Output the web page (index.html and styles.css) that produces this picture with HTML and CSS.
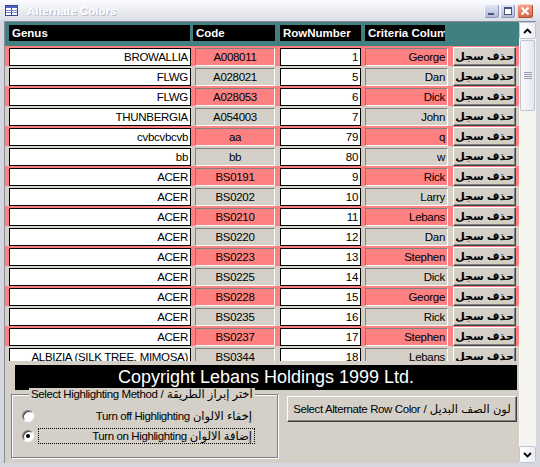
FILE: index.html
```html
<!DOCTYPE html>
<html>
<head>
<meta charset="utf-8">
<title>Alternate Colors</title>
<link rel="stylesheet" href="styles.css">
</head>
<body>
<div class="window">
  <div class="titlebar">
    <svg class="appicon" width="13" height="11" viewBox="0 0 13 11">
      <rect x="0.5" y="0.5" width="12" height="10" fill="#fff" stroke="#33489a"/>
      <rect x="1" y="1" width="11" height="2" fill="#4f66c0"/>
      <line x1="6.5" y1="3" x2="6.5" y2="10" stroke="#33489a"/>
      <line x1="1" y1="5.5" x2="12" y2="5.5" stroke="#7b8cd0"/>
      <line x1="1" y1="7.5" x2="12" y2="7.5" stroke="#7b8cd0"/>
    </svg>
    <span class="title">Alternate Colors</span>
    <div class="wctrls">
      <span class="wbtn wmin"><svg width="13" height="12" viewBox="0 0 13 12"><rect x="3" y="8" width="6" height="2" fill="#4a557e"/></svg></span>
      <span class="wbtn wmax"><svg width="13" height="12" viewBox="0 0 13 12"><rect x="3.5" y="2.5" width="7" height="7" fill="#fff" stroke="#4a557e"/><rect x="3.5" y="2.5" width="7" height="1.5" fill="#4a557e"/></svg></span>
      <span class="wbtn wclose"><svg width="14" height="12" viewBox="0 0 14 12"><path d="M3.5 2.5 L10.5 9.5 M10.5 2.5 L3.5 9.5" stroke="#fff" stroke-width="2"/></svg></span>
    </div>
  </div>
  <div class="client">
    <div class="form">
      <div class="header">
        <div class="hcell hg">Genus</div>
        <div class="hcell hc">Code</div>
        <div class="hcell hn">RowNumber</div>
        <div class="hcell hk">Criteria Column</div>
      </div>
      <div class="detail">
        <div class="row hl"><div class="f genus">BROWALLIA</div><div class="f code">A008011</div><div class="f num">1</div><div class="f crit">George</div><div class="del">حذف سجل</div></div>
        <div class="row"><div class="f genus">FLWG</div><div class="f code">A028021</div><div class="f num">5</div><div class="f crit">Dan</div><div class="del">حذف سجل</div></div>
        <div class="row hl"><div class="f genus">FLWG</div><div class="f code">A028053</div><div class="f num">6</div><div class="f crit">Dick</div><div class="del">حذف سجل</div></div>
        <div class="row"><div class="f genus">THUNBERGIA</div><div class="f code">A054003</div><div class="f num">7</div><div class="f crit">John</div><div class="del">حذف سجل</div></div>
        <div class="row hl"><div class="f genus">cvbcvbcvb</div><div class="f code">aa</div><div class="f num">79</div><div class="f crit">q</div><div class="del">حذف سجل</div></div>
        <div class="row"><div class="f genus">bb</div><div class="f code">bb</div><div class="f num">80</div><div class="f crit">w</div><div class="del">حذف سجل</div></div>
        <div class="row hl"><div class="f genus">ACER</div><div class="f code">BS0191</div><div class="f num">9</div><div class="f crit">Rick</div><div class="del">حذف سجل</div></div>
        <div class="row"><div class="f genus">ACER</div><div class="f code">BS0202</div><div class="f num">10</div><div class="f crit">Larry</div><div class="del">حذف سجل</div></div>
        <div class="row hl"><div class="f genus">ACER</div><div class="f code">BS0210</div><div class="f num">11</div><div class="f crit">Lebans</div><div class="del">حذف سجل</div></div>
        <div class="row"><div class="f genus">ACER</div><div class="f code">BS0220</div><div class="f num">12</div><div class="f crit">Dan</div><div class="del">حذف سجل</div></div>
        <div class="row hl"><div class="f genus">ACER</div><div class="f code">BS0223</div><div class="f num">13</div><div class="f crit">Stephen</div><div class="del">حذف سجل</div></div>
        <div class="row"><div class="f genus">ACER</div><div class="f code">BS0225</div><div class="f num">14</div><div class="f crit">Dick</div><div class="del">حذف سجل</div></div>
        <div class="row hl"><div class="f genus">ACER</div><div class="f code">BS0228</div><div class="f num">15</div><div class="f crit">George</div><div class="del">حذف سجل</div></div>
        <div class="row"><div class="f genus">ACER</div><div class="f code">BS0235</div><div class="f num">16</div><div class="f crit">Rick</div><div class="del">حذف سجل</div></div>
        <div class="row hl"><div class="f genus">ACER</div><div class="f code">BS0237</div><div class="f num">17</div><div class="f crit">Stephen</div><div class="del">حذف سجل</div></div>
        <div class="row"><div class="f genus">ALBIZIA (SILK TREE, MIMOSA)</div><div class="f code">BS0344</div><div class="f num">18</div><div class="f crit">Lebans</div><div class="del">حذف سجل</div></div>
      </div>
      <div class="footer">
        <div class="copyright">Copyright Lebans Holdings 1999 Ltd.</div>
        <div class="ctrlrow">
          <fieldset class="group">
            <legend class="glegend"><span dir="rtl">أختر إبراز الطريقة / Select Highlighting Method</span></legend>
            <div class="opt">
              <span class="radio"></span>
              <div class="optlabel" dir="rtl">إخفاء الالوان Turn off Highlighting</div>
            </div>
            <div class="opt focus">
              <span class="radio on"></span>
              <div class="optlabel" dir="rtl">إضافة الالوان Turn on Highlighting</div>
            </div>
          </fieldset>
          <button class="altbtn" dir="rtl">لون الصف البديل / Select Alternate Row Color</button>
        </div>
      </div>
    </div>
    <div class="vscroll">
      <div class="sbtn"><svg width="9" height="6" viewBox="0 0 9 6"><path d="M1 5 L4.5 1.5 L8 5" fill="none" stroke="#000" stroke-width="1.8"/></svg></div>
      <div class="track">
        <div class="thumb"><svg width="8" height="7" viewBox="0 0 8 7"><path d="M0 0.5H8M0 2.5H8M0 4.5H8M0 6.5H8" stroke="#9a9cab"/></svg></div>
      </div>
      <div class="sbtn"><svg width="9" height="6" viewBox="0 0 9 6"><path d="M1 1 L4.5 4.5 L8 1" fill="none" stroke="#000" stroke-width="1.8"/></svg></div>
    </div>
  </div>
</div>
</body>
</html>
```
FILE: styles.css
```css
html, body {
  margin: 0;
  padding: 0;
}
body {
  width: 540px;
  height: 467px;
  overflow: hidden;
  font-family: "Liberation Sans", "DejaVu Sans", sans-serif;
  background: #d4d0c8;
}
.window {
  width: 540px;
  height: 467px;
  display: flex;
  flex-direction: column;
  background: #d6d7de;
}
.titlebar {
  height: 21px;
  flex: none;
  display: flex;
  align-items: center;
  background: linear-gradient(#fcfcfe, #eceef3 45%, #dcdee6);
}
.appicon {
  margin-left: 5px;
  flex: none;
}
.title {
  margin-left: 9px;
  color: #fff;
  font-weight: bold;
  font-size: 11.5px;
  text-shadow: 1px 1px 0 #b9bccb;
}
.wctrls {
  margin-left: auto;
  margin-right: 7px;
  display: flex;
  align-items: center;
}
.wbtn {
  width: 15px;
  height: 14px;
  box-sizing: border-box;
  border: 1px solid #fff;
  border-radius: 3px;
  display: flex;
  align-items: center;
  justify-content: center;
}
.wmin, .wmax {
  background: linear-gradient(#e2e5f3, #b4bad8);
  border-color: #f4f5fa #8f96b8 #8f96b8 #f4f5fa;
}
.wmax {
  margin-left: 1px;
}
.wclose {
  margin-left: 2px;
  width: 16px;
  background: linear-gradient(#f0a08c, #d9664c);
  border-color: #fbd3c8 #b04a33 #b04a33 #fbd3c8;
}
.client {
  flex: 1;
  margin: 0 4px 4px 4px;
  display: flex;
  border-top: 1px solid #8a8c98;
  border-left: 1px solid #8a8c98;
  min-height: 0;
}
.form {
  width: 514px;
  display: flex;
  flex-direction: column;
  background: #d4d0c8;
}
.header {
  height: 24px;
  flex: none;
  box-sizing: border-box;
  padding-top: 3px;
  display: flex;
  background: #408080;
}
.hcell {
  height: 16px;
  box-sizing: border-box;
  padding-left: 3px;
  background: #000;
  color: #fff;
  font-weight: bold;
  font-size: 11.5px;
  line-height: 16px;
  white-space: nowrap;
  overflow: hidden;
}
.hg { margin-left: 4px; width: 181px; }
.hc { margin-left: 3px; width: 82px; }
.hn { margin-left: 5px; width: 81px; }
.hk { margin-left: 4px; width: 80px; }
.detail {
  height: 315px;
  flex: none;
  overflow: hidden;
}
.row {
  height: 20px;
  display: flex;
  padding-left: 4px;
  background: #d4d0c8;
}
.row.hl {
  background: #ff8080;
}
.f {
  height: 18px;
  margin-top: 2px;
  box-sizing: border-box;
  padding: 0 2px;
  font-size: 11.5px;
  line-height: 16px;
  letter-spacing: -0.3px;
  text-align: right;
  white-space: nowrap;
  overflow: hidden;
  color: #000;
}
.genus {
  width: 182px;
  background: #fff;
  border: 1px solid #000;
}
.code {
  margin-left: 4px;
  width: 80px;
  text-align: center;
  border: 1px solid;
  border-color: #808080 #fff #fff #808080;
}
.num {
  margin-left: 5px;
  width: 81px;
  background: #fff;
  border: 1px solid #000;
}
.crit {
  margin-left: 4px;
  width: 83px;
  border: 1px solid;
  border-color: #808080 #fff #fff #808080;
}
.del {
  margin-left: 5px;
  margin-top: 1px;
  width: 63px;
  height: 19px;
  flex: none;
  box-sizing: border-box;
  background: #d4d0c8;
  border: 1px solid;
  border-color: #fff #404040 #404040 #fff;
  box-shadow: inset -1px -1px 0 #808080;
  font-weight: bold;
  font-size: 11px;
  line-height: 16px;
  text-align: center;
  white-space: nowrap;
  overflow: hidden;
  color: #000;
}
.footer {
  flex: 1;
  padding-top: 4px;
}
.copyright {
  margin-left: 10px;
  width: 502px;
  height: 25px;
  background: #000;
  color: #fff;
  font-size: 18px;
  line-height: 25px;
  text-align: center;
  white-space: nowrap;
}
.ctrlrow {
  display: flex;
  align-items: flex-start;
  margin-top: -2px;
}
.group {
  margin: 0 0 0 6px;
  width: 267px;
  box-sizing: border-box;
  padding: 6px 0 11px 0;
  border: 1px solid #808080;
  box-shadow: inset 1px 1px 0 #fff, 1px 1px 0 #fff;
  min-width: 0;
}
.glegend {
  margin-left: 17px;
  padding: 0 2px;
  font-size: 11.5px;
  line-height: 12px;
  letter-spacing: -0.4px;
  background: #d4d0c8;
  color: #000;
  white-space: nowrap;
}
.opt {
  height: 20px;
  display: flex;
  align-items: center;
}
.radio {
  margin-left: 10px;
  width: 12px;
  height: 12px;
  flex: none;
  box-sizing: border-box;
  border-radius: 50%;
  background: #fff;
  border: 1px solid;
  border-color: #808080 #fff #fff #808080;
  box-shadow: inset 1px 1px 0 #404040;
  display: flex;
  align-items: center;
  justify-content: center;
}
.radio.on::after {
  content: "";
  width: 4px;
  height: 4px;
  border-radius: 50%;
  background: #000;
}
.optlabel {
  margin-left: 4px;
  width: 217px;
  height: 16px;
  box-sizing: border-box;
  padding-right: 2px;
  border: 1px dotted transparent;
  font-size: 11.5px;
  line-height: 14px;
  letter-spacing: -0.4px;
  white-space: nowrap;
  color: #000;
}
.opt.focus .optlabel {
  border-color: #000;
}
.altbtn {
  margin: 8px 0 0 9px;
  width: 230px;
  height: 26px;
  padding: 0;
  box-sizing: border-box;
  background: #d4d0c8;
  border: 1px solid;
  border-color: #fff #404040 #404040 #fff;
  box-shadow: inset -1px -1px 0 #808080;
  font-family: "Liberation Sans", "DejaVu Sans", sans-serif;
  font-size: 11.5px;
  letter-spacing: -0.4px;
  color: #000;
  white-space: nowrap;
}
.vscroll {
  width: 17px;
  flex: none;
  display: flex;
  flex-direction: column;
  background: #f4f3ef;
}
.sbtn {
  height: 17px;
  flex: none;
  box-sizing: border-box;
  border: 1px solid #c2c5d3;
  border-radius: 2px;
  background: linear-gradient(90deg, #ffffff, #eceef4);
  display: flex;
  align-items: center;
  justify-content: center;
}
.track {
  flex: 1;
  padding-top: 1px;
  border-left: 1px solid #fbfbfa;
}
.thumb {
  height: 71px;
  margin-right: 1px;
  box-sizing: border-box;
  border: 1px solid #bfc2cf;
  border-radius: 2px;
  background: linear-gradient(90deg, #f9f9fb, #e6e7ee);
  display: flex;
  align-items: center;
  justify-content: center;
}
```
